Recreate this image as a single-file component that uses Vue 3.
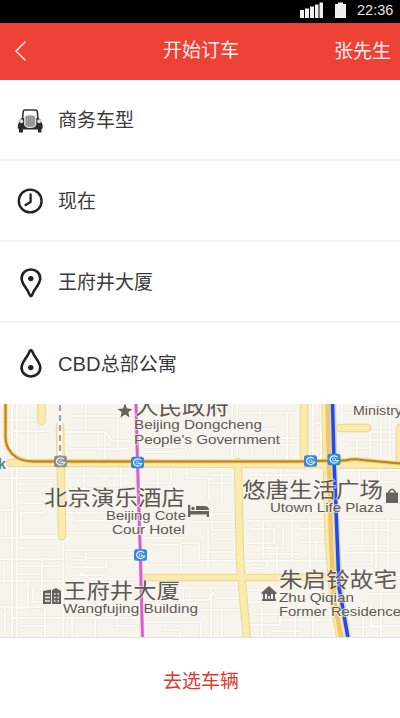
<script setup>
import { ref } from 'vue';

const rows = ref([
    { icon: 'car', text: '商务车型' },
    { icon: 'clock', text: '现在' },
    { icon: 'from', text: '王府井大厦' },
    { icon: 'to', latin: 'CBD', text: '总部公寓' },
]);

// small streets
const streets = [
    'M0 420H36M13 431H50M72 416H130M65 432H106L112 441H131M70 449H128M86 404V432M105 432V460M118 412V449M36 431V456',
    'M12 404V637M17 404V637M28 404V460M0 478H58M18 484H52V493H18M66 476H130M71 489H135M21 503H44V513H21V536H58',
    'M84 468V497M104 476V488M121 466V497M0 510H12M66 513H103M74 521H108M69 533H132M0 538H60M17 548H58M63 541V637',
    'M0 559H62M15 566H61M63 550H138M68 560H86V550M86 558H106V567H70M106 567V558H138M72 575H104M0 581H62M17 574H42V581',
    'M42 559V596M28 581V608H17M33 588V602H42M0 607H45M12 618H138M45 607V637M72 617V637M95 617V637M117 618V626H138M20 626H45M78 571L90 579H138',
    'M145 447H185L190 458M145 452H174M158 468V491M171 469V483H145M187 465V478H209V499M190 468H232M202 475H233M212 483H233M222 466V503',
    'M205 404V450M218 411V430M232 404V460M237 404V460M243 413H296M244 429H275V459M260 404V429M287 414V459M243 445H299M252 430V455M275 438H299',
    'M145 514H236M195 522H237M212 503V530H238M208 530V573M145 538H187V530M153 545H181V571M181 543H199V561H237M217 539H235V552H208M145 565H198',
    'M145 588H238M145 600H209L215 591M183 588V608M211 588V637M201 610H240M218 598H240M145 622H201V637M165 622V630H180V637M222 610V637',
    'M247 475H302V488M256 465V481M267 474V504M281 466V484M247 521H328M251 529H274V543H247M263 521V558M283 525V548H264M247 561H327M292 519V561',
    'M300 529H327M300 542H327M310 519V573M316 542V561M250 554H300M252 568H267V561M277 548V573M247 590H270M251 602H265M253 614H330M262 605V637',
    'M248 625H280V614M280 620H331M295 614V637M313 613V637M270 631H300M307 404V459M313 404V459M321 404V459M315 423H328M313 440H327',
    'M342 404V427M350 440H400M357 441V459M370 409V457M381 420V459M390 415V455M347 413H368M348 448H371M370 432H400M384 440H400',
    'M348 470H400M349 482H396M359 466V488M379 468V485M344 521H400M350 530H388V546H347M362 520V547M376 521V573M388 517V572M345 553H400M346 564H372V553',
    'M344 575H400M363 613V637M381 594V637M366 594H400M351 615H400M354 627H381M371 604V626H400M39 404V414M0 444H12M6 515V538M4 566V581M5 607V631',
];

const labels = [
    { cn: true, text: '人民政府', x: 135, y: 414, w: 94 },
    { text: 'Beijing Dongcheng', x: 134, y: 429, w: 128 },
    { text: "People's Government", x: 134, y: 444, w: 146 },
    { text: 'Ministry', x: 353, y: 414.5, w: 49 },
    { cn: true, text: '北京演乐酒店', x: 44, y: 504.5, w: 141 },
    { text: 'Beijing Cote', x: 106, y: 519.5, w: 80 },
    { text: 'Cour Hotel', x: 112, y: 534, w: 73 },
    { cn: true, text: '悠唐生活广场', x: 242, y: 496.5, w: 141 },
    { text: 'Utown Life Plaza', x: 270, y: 511.5, w: 113 },
    { cn: true, text: '王府井大厦', x: 63, y: 597.5, w: 117 },
    { text: 'Wangfujing Building', x: 63, y: 613, w: 135 },
    { cn: true, text: '朱启铃故宅', x: 279, y: 586.5, w: 118 },
    { text: 'Zhu Qiqian', x: 279, y: 601.5, w: 75 },
    { text: 'Former Residence', x: 279, y: 616, w: 122 },
];

const stations = [
    { x: 60.5, y: 461.5, color: '#8f8f8c' },
    { x: 137.5, y: 462.5, color: '#3489dc' },
    { x: 310.5, y: 461, color: '#3489dc' },
    { x: 334, y: 459.5, color: '#3489dc' },
    { x: 140.5, y: 555, color: '#3489dc' },
];
</script>

<template>
    <div class="page">
        <div class="status">
            <svg class="signal" width="24" height="16" viewBox="0 0 24 16">
                <path d="M0 8h4v8H0zM5 6.500h4V16H5zM10 4.500h4V16h-4zM15 2.500h3.500V16H15zM19.500 0.500H23V16h-3.500z" />
            </svg>
            <svg class="battery" width="11" height="16" viewBox="0 0 11 16">
                <path d="M3 0.500h5V2h3v14H0V2h3z" />
            </svg>
            <span class="time">22:36</span>
        </div>

        <header class="header">
            <svg class="back" width="14" height="22" viewBox="0 0 14 22">
                <path d="M11.500 1.500L2 11L11.500 20.500" />
            </svg>
            <h1>开始订车</h1>
            <span class="user">张先生</span>
        </header>

        <ul class="list">
            <li v-for="row in rows" :key="row.icon" class="row">
                <svg class="icon" width="28" height="32" viewBox="0 0 28 32">
                    <g v-if="row.icon === 'car'">
                        <path d="M6.500 15L7.200 7.500Q7.400 6 9 6H19.500Q21.100 6 21.300 7.500L22 15" fill="none" stroke="#333" stroke-width="1.600" />
                        <path d="M3 18Q3.500 14.500 7 14H21.500Q25 14.500 25.500 18L26.600 21V24.500L25.500 25V28.500H22V25.500H7V28.500H3V25L1.800 24.500V21Z" fill="#2b2b2b" />
                        <circle cx="5.300" cy="17.300" r="2" fill="#ddd" />
                        <circle cx="23.200" cy="17.300" r="2" fill="#ddd" />
                        <path d="M8.700 11.800Q14.200 9.300 19.800 11.800V21Q19.300 23.500 14.200 23.500Q9.200 23.500 8.700 21Z" fill="#b0b0b0" stroke="#f1f1f1" stroke-width="1" />
                        <path d="M10.700 12.300V22M12.500 12V22.500M14.300 12V22.500M16.100 12V22.500M17.900 12.300V22" stroke="#6a6a6a" stroke-width=".6" />
                    </g>
                    <g v-else-if="row.icon === 'clock'" fill="none" stroke="#222" stroke-linecap="round" stroke-linejoin="round">
                        <circle cx="14.200" cy="16" r="11.400" stroke-width="2.400" />
                        <path d="M14.600 9.300V17L9.500 20" stroke-width="2.300" />
                    </g>
                    <g v-else-if="row.icon === 'from'">
                        <path d="M14.900 30C13.900 30 13.500 28.600 12.500 26.200C10.500 21.800 5.600 18 5.600 12.200C5.600 7.200 9.800 3.500 14.900 3.500S24.200 7.200 24.200 12.200C24.200 18 19.300 21.800 17.300 26.200C16.300 28.600 15.900 30 14.900 30Z" fill="none" stroke="#222" stroke-width="2.600" />
                        <circle cx="14.800" cy="12.600" r="2.700" fill="#222" />
                    </g>
                    <g v-else>
                        <path d="M14.900 3C13.900 3 13.500 4.400 12.500 6.800C10.500 11.200 5.600 15 5.600 20.800C5.600 25.800 9.800 29.500 14.900 29.500S24.200 25.800 24.200 20.800C24.200 15 19.300 11.200 17.300 6.800C16.300 4.400 15.900 3 14.900 3Z" fill="none" stroke="#222" stroke-width="2.600" />
                        <circle cx="14.800" cy="20.600" r="2.700" fill="#222" />
                    </g>
                </svg>
                <span class="label"><span v-if="row.latin" class="latin">{{ row.latin }}</span>{{ row.text }}</span>
            </li>
        </ul>

        <svg class="map" width="400" height="234" viewBox="0 404 400 234">
            <rect x="0" y="404" width="400" height="234" fill="#f6f4ec" />
            <g fill="none">
                <path v-for="(d, i) in streets" :key="'a' + i" :d="d" stroke="#e8e5dc" stroke-width="2.800" />
                <path v-for="(d, i) in streets" :key="'b' + i" :d="d" stroke="#fffffc" stroke-width="1.600" />
            </g>

            <!-- yellow roads -->
            <g fill="none" stroke-linecap="round">
                <g stroke="#ecd98c">
                    <path d="M10 463H61L400 465" stroke-width="8" />
                    <path d="M41.500 400V421M60 426L62 536M304 404V462M340 428H367M400 428V462M238 462L240 560L247 640" stroke-width="8.500" />
                    <path d="M145 577.500H278L330 577" stroke-width="7.500" />
                    <path d="M328.500 400L332 540L337 600L344 640" stroke-width="15" />
                </g>
                <g stroke="#f9eaae">
                    <path d="M10 463H61L400 465" stroke-width="6" />
                    <path d="M41.500 400V421M60 426L62 536M304 404V462M340 428H367M400 428V462M238 462L240 560L247 640" stroke-width="6.500" />
                    <path d="M145 577.500H278L330 577" stroke-width="5.500" />
                    <path d="M328.500 400L332 540L337 600L344 640" stroke-width="13" />
                </g>
                <path d="M327.500 400L331 540L334 600L342 640" stroke="#f4c46c" stroke-width="4.500" />
            </g>

            <!-- subway lines -->
            <g fill="none">
                <path d="M5.500 404V438Q6 450 16 457Q23 461.500 34 461.500H300L334 460.500H345Q354 458.500 363 460L400 463.500" stroke="#edce83" stroke-width="4" />
                <path d="M5.500 404V438Q6 450 16 457Q23 461.500 34 461.500H300L334 460.500H345Q354 458.500 363 460L400 463.500" stroke="#c18112" stroke-width="2" />
                <path d="M60 404V456" stroke="#fff" stroke-width="4" />
                <path d="M60 405V456" stroke="#a3a3a3" stroke-width="2.400" stroke-dasharray="6 4" />
                <path d="M136 404L137.500 462L140.500 560L142.500 638" stroke="#f3c9ee" stroke-width="4" />
                <path d="M136 404L137.500 462L140.500 560L142.500 638" stroke="#d65fcd" stroke-width="2.800" />
                <path d="M332.500 404L334 460L337 535L339 587L348 638" stroke="#c7cff2" stroke-width="5.500" />
                <path d="M332.500 404L334 460L337 535L339 587L348 638" stroke="#244be0" stroke-width="3.500" />
            </g>

            <g v-for="(s, i) in stations" :key="i" :transform="`translate(${s.x} ${s.y})`">
                <rect x="-6.500" y="-5.700" width="13" height="11.400" rx="2.500" :fill="s.color" />
                <path d="M3.600 -2.200A4.200 3.600 0 1 0 4.200 1H1" fill="none" stroke="#e6f2fc" stroke-width="1.200" />
                <circle r="1.500" fill="none" stroke="#e6f2fc" stroke-width=".8" />
            </g>

            <!-- place icons -->
            <g fill="#66625f">
                <path d="M125 403.500L127 408.500L132.500 409L128.300 412.300L129.600 417.500L125 414.500L120.400 417.500L121.700 412.300L117.500 409L123 408.500Z" />
                <path d="M188 505H190.300V511H209V517H206.800V514.500H190.300V517H188ZM196 506H204Q209 506 209 510H196Z" />
                <circle cx="193" cy="508.500" r="1.700" />
                <path d="M386 492.500H398V503H386Z" />
                <path d="M389 493V491.500Q392 487 395 491.500V493" fill="none" stroke="#66625f" stroke-width="1.500" />
                <path d="M43 591L51 589.500V604H43ZM52 590L56 588L61 591V604H52Z" />
                <path d="M45 594H50M45 597.500H50M45 601H50M54 594H55.500M57.500 594H59M54 597.500H55.500M57.500 597.500H59M54 601H55.500M57.500 601H59" stroke="#f2f0e8" stroke-width="1.500" />
                <path d="M261.500 592.500L269 586L276.500 592.500V594H261.500ZM263 594H265V599H263ZM267 594H271V600H269.800V596H268.200V600H267ZM273 594H275V599H273ZM262 599H276V601H262Z" />
            </g>

            <text v-for="l in labels" :key="l.text" :class="l.cn ? 'cn' : 'en'" :x="l.x" :y="l.y" :textLength="l.w" lengthAdjust="spacingAndGlyphs">{{ l.text }}</text>
            <text class="park" x="-2" y="469">k</text>
            <path d="M0 637.500H400" stroke="#e9e3dc" />
        </svg>

        <footer class="footer">去选车辆</footer>
    </div>
</template>

<style>
body {
    margin: 0;
}
</style>

<style scoped>
.page {
    width: 400px;
    height: 718px;
    display: flex;
    flex-direction: column;
    overflow: hidden;
    background: #fff;
    color: #3a3a3a;
    font-family: "Liberation Sans", "Noto Sans CJK SC", sans-serif;
    font-size: 19px;
}

.status {
    height: 23px;
    flex: none;
    display: flex;
    justify-content: flex-end;
    background: #000;
    color: #e4e4e4;
    box-sizing: border-box;
    padding: 2px 6px 0 0;
}

.status svg {
    fill: #f0f0f0;
}

.battery {
    margin-left: 11px;
}

.time {
    margin-left: 11px;
    width: 37px;
    font-size: 14.500px;
    line-height: 17px;
}

.header {
    height: 57px;
    flex: none;
    display: grid;
    grid-template-columns: 100px 1fr 100px;
    align-items: center;
    background: #ee4136;
    color: #fff3f0;
}

.back {
    margin-left: 14px;
    margin-top: -2px;
    fill: none;
    stroke: #ffe5e0;
    stroke-width: 1.500;
}

.header h1 {
    margin: 0;
    padding: 0 0 1px 2px;
    font-size: 19px;
    line-height: 28px;
    font-weight: normal;
    text-align: center;
}

.user {
    justify-self: end;
    padding: 0 9px 0 0;
    line-height: 28px;
}

.list {
    flex: none;
    margin: 0;
    padding: 0;
    list-style: none;
}

.row {
    height: 81px;
    box-sizing: border-box;
    display: flex;
    align-items: center;
    padding-left: 16px;
    border-bottom: 2px solid #f2f2f2;
}

.row:last-child {
    border-bottom-color: #fff;
}

.icon {
    margin-right: 14px;
}

.label {
    padding-top: 3px;
    line-height: 28px;
}

.latin {
    font-size: 20.200px;
}

.map {
    flex: none;
    display: block;
}

.cn {
    font-size: 21px;
    fill: #5d5956;
    stroke: rgba(248, 246, 238, 0.6);
    stroke-width: 2px;
    paint-order: stroke;
}

.en {
    font-size: 13.500px;
    fill: #5d5956;
    stroke: rgba(248, 246, 238, 0.7);
    stroke-width: 2px;
    paint-order: stroke;
}

.park {
    font-size: 14px;
    font-weight: bold;
    fill: #4f8a78;
}

.footer {
    flex: 1;
    display: flex;
    align-items: center;
    justify-content: center;
    padding-left: 2px;
    padding-top: 2px;
    color: #e3372c;
}
</style>
